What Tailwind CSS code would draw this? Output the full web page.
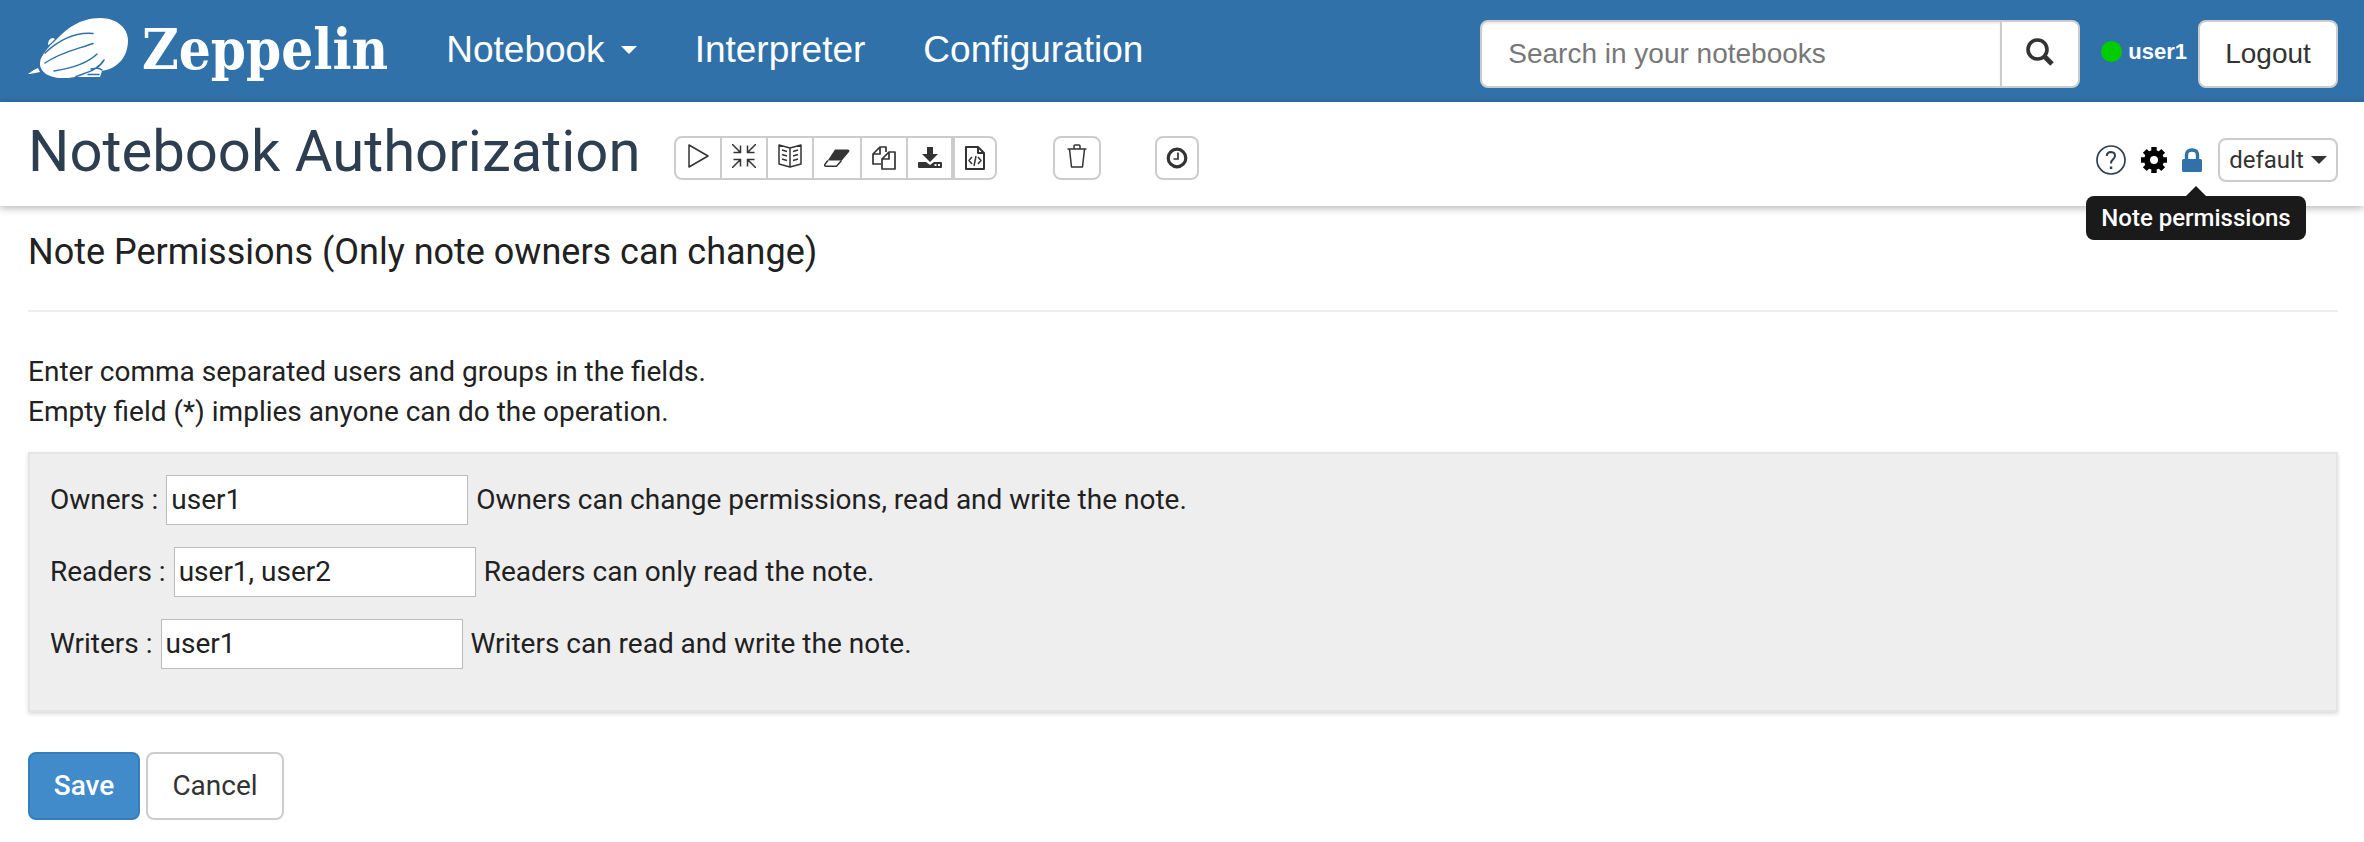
<!DOCTYPE html>
<html lang="en">
<head>
<meta charset="utf-8">
<title>Zeppelin</title>
<script src="https://cdn.jsdelivr.net/npm/@tailwindcss/browser@4"></script>
</head>
<body class="bg-white font-[Roboto,sans-serif] text-[28px] leading-10 text-[#212121]">
<header class="flex h-[102px] items-center bg-[#3071a9] pr-[26px] pl-7 font-['Liberation_Sans',sans-serif] text-white">
  <a href="#" class="flex items-center gap-[14px] pb-1" aria-label="Zeppelin home">
    <svg class="h-[62px] w-[100px]" viewBox="0 0 100 62" fill="#fff">
      <path d="M12 44C13 38 20 29 28 22C38 11 52 0 72 0C90 0 100 11 100 22C100 38 91 50 74 53L72 59L47 59C42 60 38 60 34 60C20 60 11 53 12 44Z"/>
      <path d="M0 56C4 53 7 51 10 50L12 54L2 56ZM20 27C20 23 22 20 25 20L27 21L22 26Z"/>
      <g fill="none" stroke="#3071a9" stroke-width="1.500" stroke-linecap="round"><path d="M17 35C31 22 48 14 65 15.500M17 45C33 34 50 31 65 25.500M26 53C45 50 60 45 69 36M76 42C70 52 60 54 48 58.500M63 51C67 50 72 50 74 52M60 56.500H71" /></g>
    </svg>
    <span class="text-[56px] leading-[62px] font-bold font-['DejaVu_Serif_Condensed','DejaVu_Serif',serif]">Zeppelin</span>
  </a>
  <nav class="ml-[58px] flex items-center gap-[58px] pb-[2px] text-[37px] leading-[40px]">
    <a href="#" class="flex items-center gap-4">Notebook <svg class="h-2 w-4" viewBox="0 0 16 8" fill="#fff"><path d="M0 0H16L8 8Z"/></svg></a>
    <a href="#">Interpreter</a>
    <a href="#">Configuration</a>
  </nav>
  <div class="ml-auto flex items-center pt-[6px]">
    <form class="flex h-[68px] w-[600px] text-[28px]">
      <input type="text" aria-label="Search in your notebooks" placeholder="Search in your notebooks" class="min-w-0 flex-1 rounded-l-lg border-2 border-[#ccc] bg-white px-[26px] text-[#555] shadow-[inset_0_2px_2px_rgba(0,0,0,0.075)] placeholder:text-[#777]">
      <button type="button" aria-label="Search" class="flex w-[78px] items-center justify-center rounded-r-lg border-2 border-l-0 border-[#ccc] bg-white pb-1">
        <svg class="h-7 w-7" viewBox="0 0 28 28" fill="none" stroke="#333"><circle cx="11.500" cy="11.500" r="9.500" stroke-width="3.600"/><path d="M18 18L26 26" stroke-width="5"/></svg>
      </button>
    </form>
    <div class="flex items-center pb-[5px]">
      <span class="ml-[21px] h-[21px] w-[21px] rounded-full bg-[#00cc00]"></span>
      <span class="ml-[6px] text-[22px] font-bold">user1</span>
    </div>
    <button type="button" class="ml-[11px] h-[68px] w-[140px] rounded-lg border-2 border-[#ccc] bg-white text-[28px] text-[#333]">Logout</button>
  </div>
</header>

<section class="flex h-[104px] items-start bg-white pr-[26px] pl-7 shadow-[0_2px_8px_rgba(0,0,0,0.3)]">
  <h1 class="pt-[15px] text-[58px] leading-[68px] text-[#2c3e50]">Notebook Authorization</h1>
  <div class="ml-[34px] flex pt-[34px] text-[#333]">
    <div class="flex h-11 divide-x-2 divide-[#ccc] rounded-lg border-2 border-[#ccc]">
      <button type="button" aria-label="Run all" class="flex w-[46px] items-center justify-center pb-1"><svg class="h-6 w-6" viewBox="0 0 24 24" fill="none" stroke="currentColor" stroke-width="1.500" stroke-linejoin="round"><path d="M3 1V23L22 12Z"/></svg></button>
      <button type="button" aria-label="Hide code" class="flex w-[46px] items-center justify-center pb-1"><svg class="h-6 w-6" viewBox="0 0 24 24" fill="none" stroke="currentColor" stroke-width="1.500"><path d="M0 0L8 8M1.500 8.500H8.500V1.500M24 0L16 8M15.500 1.500V8.500H22.500M0 24L8 16M1.500 15.500H8.500V22.500M24 24L16 16M15.500 22.500V15.500H22.500"/></svg></button>
      <button type="button" aria-label="Show output" class="flex w-[46px] items-center justify-center pb-1"><svg class="h-6 w-6" viewBox="0 0 24 24" fill="none" stroke="currentColor" stroke-width="1.500" stroke-linejoin="round"><path d="M1 1L12 4L23 1V20L12 23L1 20ZM12 4V23M4 6L9 7.500M4 10.500L9 12M4 15L9 16.500M20 6L15 7.500M20 10.500L15 12M20 15L15 16.500"/></svg></button>
      <button type="button" aria-label="Clear output" class="flex w-[48px] items-center justify-center"><svg class="h-[18px] w-[26px]" viewBox="0 0 26 18"><path d="M11 .5H24Q26.300 1 25 3L17.800 11.500H3.800Z" fill="currentColor"/><path d="M3.800 11.500L.8 15.500Q.3 17.200 2 17.200H12.500L17.500 11.500" fill="none" stroke="currentColor" stroke-width="1.500"/></svg></button>
      <button type="button" aria-label="Clone" class="flex w-[46px] items-center justify-center"><svg class="h-6 w-6" viewBox="0 0 24 24" fill="none" stroke="currentColor" stroke-width="1.700" stroke-linejoin="round"><path d="M9 18H1V8L8 1H14V6M8 1V8H1M17 6H23V23H10V13ZM17 6V13H10"/></svg></button>
      <button type="button" aria-label="Export" class="flex w-[45px] items-center justify-center"><svg class="h-6 w-6" viewBox="0 0 24 24" fill="currentColor"><path d="M9 1H15V8H20L12 16L4 8H9ZM1 16H8L12 19L16 16H23Q24 16 24 17V21Q24 22 23 22H1Q0 22 0 21V17Q0 16 1 16Z"/><path d="M16.500 18H18.500V20H16.500ZM20 18H22V20H20Z" fill="#fff"/></svg></button>
      <button type="button" aria-label="Show code" class="flex w-[42px] items-center justify-center border-l-2 border-[#ccc]"><svg class="h-6 w-5" viewBox="0 0 20 24" fill="none" stroke="currentColor" stroke-width="2" stroke-linejoin="round"><path d="M1 1H13L19 7V23H1ZM13 1V7H19"/><path d="M7 11L4 14.500L7 18M13 11L16 14.500L13 18M11 10L9 20" stroke-width="1.500"/></svg></button>
    </div>
    <button type="button" aria-label="Remove note" class="ml-14 flex h-11 w-12 items-center justify-center rounded-lg border-2 border-[#ccc] pb-1"><svg class="h-6 w-5" viewBox="0 0 20 24" fill="none" stroke="currentColor" stroke-width="1.500" stroke-linejoin="round"><path d="M.5 5H19.500M2.500 5L4.500 23H15.500L17.500 5M7 5V2Q7 1 8 1H12Q13 1 13 2V5"/></svg></button>
    <button type="button" aria-label="Schedule" class="ml-[54px] flex h-11 w-11 items-center justify-center rounded-lg border-2 border-[#ccc]"><svg class="h-[22px] w-[22px]" viewBox="0 0 22 22" fill="none" stroke="currentColor"><circle cx="11" cy="11" r="8.800" stroke-width="3.200"/><path d="M12 5.500V12H7.500" stroke-width="1.700"/></svg></button>
  </div>
  <div class="ml-auto flex h-11 items-center mt-9">
    <button type="button" aria-label="Keyboard shortcuts"><svg class="h-[30px] w-[30px]" viewBox="0 0 30 30" fill="none" stroke="#2c3e50"><circle cx="15" cy="15" r="14" stroke-width="1.700"/><path d="M10.800 11Q11 7 15 7Q19 7.200 19 10.800Q19 13 16.800 14.600Q15 16 15 18.500" stroke-width="2"/><path d="M13.800 21.500H16.300V24H13.800Z" fill="#2c3e50" stroke="none"/></svg></button>
    <button type="button" aria-label="Interpreter binding" class="ml-[15px]"><svg class="h-[26px] w-[26px]" viewBox="-13 -13 26 26"><circle r="7" fill="none" stroke="#000" stroke-width="6"/><g stroke="#000" stroke-width="5.400"><path d="M0 -13V-7M0 13V7M-13 0H-7M13 0H7M-9.200 -9.200L-6 -6M9.200 9.200L6 6M-9.200 9.200L-6 6M9.200 -9.200L6 -6"/></g></svg></button>
    <div class="relative ml-[15px]">
      <button type="button" aria-label="Note permissions" aria-describedby="perm-tip" class="block"><svg class="h-6 w-5" viewBox="0 0 20 24"><path d="M4.500 12V7Q4.500 2 10 2Q15.500 2 15.500 7V12" fill="none" stroke="#3071a9" stroke-width="3.400"/><rect y="11" width="20" height="13" rx="1.500" fill="#3071a9"/></svg></button>
      <div id="perm-tip" role="tooltip" class="absolute top-[38px] left-1/2 flex -translate-x-[106px] flex-col">
        <svg class="ml-[100px] h-[10px] w-5" viewBox="0 0 20 10"><path d="M0 10L10 0L20 10Z" fill="#1a1a1a"/></svg>
        <span class="flex h-11 w-[220px] items-center justify-center rounded-lg bg-[#1a1a1a] text-[24px] font-medium whitespace-nowrap text-white">Note permissions</span>
      </div>
    </div>
    <button type="button" class="ml-4 flex h-11 w-[120px] items-center justify-center gap-[7px] rounded-lg border-2 border-[#ccc] text-[24px] text-[#333]">default <svg class="h-2 w-4" viewBox="0 0 16 8" fill="#333"><path d="M0 0H16L8 8Z"/></svg></button>
  </div>
</section>

<main class="pt-[26px] pr-[26px] pl-7">
  <h2 class="text-[36px] leading-[40px]">Note Permissions (Only note owners can change)</h2>
  <hr class="mt-[38px] border-t-2 border-[#eee]">
  <p class="mt-10">Enter comma separated users and groups in the fields.<br>Empty field (*) implies anyone can do the operation.</p>
  <form>
    <div class="mt-5 flex h-[260px] flex-col gap-5 border-2 border-[#e5e5e5] bg-[#eee] px-5 pt-5 shadow-[0_2px_4px_rgba(0,0,0,0.15)]">
      <div class="flex h-[52px] items-center gap-2"><label for="owners">Owners :</label><input id="owners" type="text" value="user1" class="h-[50px] w-[302px] border border-[#bbb] bg-white px-1 pb-[2px]"><span>Owners can change permissions, read and write the note.</span></div>
      <div class="flex h-[52px] items-center gap-2"><label for="readers">Readers :</label><input id="readers" type="text" value="user1, user2" class="h-[50px] w-[302px] border border-[#bbb] bg-white px-1 pb-[2px]"><span>Readers can only read the note.</span></div>
      <div class="flex h-[52px] items-center gap-2"><label for="writers">Writers :</label><input id="writers" type="text" value="user1" class="h-[50px] w-[302px] border border-[#bbb] bg-white px-1 pb-[2px]"><span>Writers can read and write the note.</span></div>
    </div>
    <div class="mt-10 flex gap-[6px]">
      <button type="button" class="h-[68px] w-[112px] rounded-lg border-2 border-[#357ebd] bg-[#428bca] font-medium text-white">Save</button>
      <button type="button" class="h-[68px] w-[138px] rounded-lg border-2 border-[#ccc] bg-white text-[#333]">Cancel</button>
    </div>
  </form>
</main>
</body>
</html>
